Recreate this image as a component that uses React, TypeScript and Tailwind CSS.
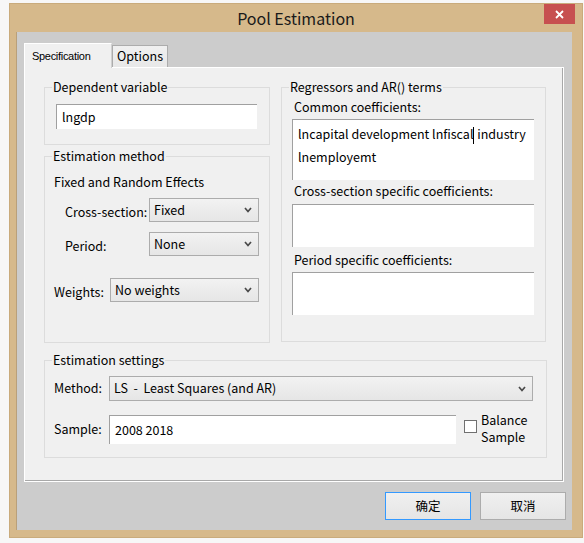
import React from 'react';

const font = "font-['Noto_Sans_CJK_SC','Noto_Sans',sans-serif]";

const Chevron = () => (
  <svg width="8" height="6" viewBox="0 0 8 6" className="shrink-0">
    <path d="M1 1 L4 4.5 L7 1" fill="none" stroke="#4a4a4a" strokeWidth="1.7" />
  </svg>
);

const Select: React.FC<{ value: string; className: string }> = ({ value, className }) => (
  <div
    className={`flex items-center justify-between pl-[4px] pr-[6px] border border-[#acacac] bg-linear-to-b from-[#f2f2f2] to-[#e6e6e6] text-[12.5px] whitespace-pre ${className}`}
  >
    <span>{value}</span>
    <Chevron />
  </div>
);

const Group: React.FC<{ label: string; className: string; children: React.ReactNode }> = ({
  label,
  className,
  children,
}) => (
  <fieldset className={`border border-[#dcdcdc] ${className}`}>
    <legend className="ml-[7px] px-[1px] text-[12.5px] leading-[16px]">{label}</legend>
    {children}
  </fieldset>
);

export default function App() {
  return (
    <div className={`w-[584px] h-[543px] bg-[#f7f7f7] pt-[3px] pl-[9px] text-black whitespace-nowrap ${font}`}>
      <div className="w-[574px] h-[535px] bg-[#d6b98b] border border-[#c9ab7c] flex flex-col">
        {/* title bar */}
        <div className="relative h-[28px] shrink-0 flex items-center justify-center">
          <span className="text-[16px] text-[#1a1a1a]">Pool Estimation</span>
          <div className="absolute right-[7px] top-0 w-[31px] h-[20px] bg-[#c75050] flex items-center justify-center">
            <svg width="9" height="9" viewBox="0 0 9 9">
              <path d="M1 1 L8 8 M8 1 L1 8" stroke="#fff" strokeWidth="1.8" />
            </svg>
          </div>
        </div>

        {/* client */}
        <div className="ml-[6px] w-[556px] h-[498px] bg-[#cccccc] border-l border-[#b9a07a] pt-[10px]">
          {/* tabs */}
          <div className="flex items-end pl-[7px] h-[25px]">
            <div className="relative z-10 w-[88px] h-[25px] -mb-px bg-[#f0f0f0] border-l border-t border-white border-r border-r-[#d0d0d0] pl-[7px] pt-[4px] font-['Liberation_Sans',sans-serif] text-[11px] tracking-[-0.3px]">
              Specification
            </div>
            <div className="w-[56px] h-[22px] bg-linear-to-b from-[#f0f0f0] to-[#e8e8e8] border border-b-0 border-[#acacac] flex items-center justify-center text-[12.5px]">
              Options
            </div>
          </div>

          {/* panel */}
          <div className="ml-[7px] w-[540px] h-[415px] bg-[#f0f0f0] border border-white shadow-[inset_-1px_-1px_0_#a8a8a8] pl-[19px] pt-[11px]">
            <div className="flex gap-[11px]">
              <div className="flex flex-col w-[226px]">
                <Group label="Dependent variable" className="h-[66px]">
                  <div className="ml-[11px] mt-[9px] w-[201px] h-[25px] bg-white border-t border-l border-[#a0a0a0] pl-[5px] text-[12.5px] leading-[23px]">
                    lngdp
                  </div>
                </Group>
                <Group label="Estimation method" className="mt-[3px] h-[195px]">
                  <div className="text-[12.5px] leading-[16px] pl-[9px] mt-[10px]">Fixed and Random Effects</div>
                  <div className="flex items-center mt-[8px] pl-[20px]">
                    <span className="w-[84px] text-[12.5px] mt-[4px]">Cross-section:</span>
                    <Select value="Fixed" className="w-[110px] h-[24px]" />
                  </div>
                  <div className="flex items-center mt-[10px] pl-[20px]">
                    <span className="w-[84px] text-[12.5px] mt-[4px]">Period:</span>
                    <Select value="None" className="w-[110px] h-[24px]" />
                  </div>
                  <div className="flex items-center mt-[22px] pl-[9px]">
                    <span className="w-[56px] text-[12.5px] mt-[4px]">Weights:</span>
                    <Select value="No weights" className="w-[149px] h-[24px]" />
                  </div>
                </Group>
              </div>

              <Group label="Regressors and AR() terms" className="w-[265px] h-[263px]">
                <div className="pl-[12px] mt-[4px] text-[12.5px] leading-[16px]">Common coefficients:</div>
                <div className="ml-[10px] mt-[4px] w-[242px] h-[61px] bg-white border-t border-l border-[#a0a0a0] pl-[5px] pt-[2px] text-[12.5px] leading-[23px]">
                  <div>
                    lncapital development lnfiscal
                    <span className="inline-block w-px h-[17px] bg-black align-middle" />
                    {' '}industry
                  </div>
                  <div>lnemployemt</div>
                </div>
                <div className="pl-[12px] mt-[3px] text-[12.5px] leading-[16px]">Cross-section specific coefficients:</div>
                <div className="ml-[10px] mt-[5px] w-[242px] h-[43px] bg-white border-t border-l border-[#a0a0a0]" />
                <div className="pl-[12px] mt-[5px] text-[12.5px] leading-[16px]">Period specific coefficients:</div>
                <div className="ml-[10px] mt-[4px] w-[242px] h-[43px] bg-white border-t border-l border-[#a0a0a0]" />
              </Group>
            </div>

            <Group label="Estimation settings" className="mt-[9px] w-[503px] h-[106px]">
              <div className="flex items-center mt-[8px] pl-[9px]">
                <span className="w-[55px] text-[12.5px]">Method:</span>
                <Select value="LS  -  Least Squares (and AR)" className="w-[424px] h-[25px]" />
              </div>
              <div className="flex items-center mt-[13px] pl-[9px]">
                <span className="w-[55px] text-[12.5px]">Sample:</span>
                <div className="w-[347px] h-[29px] bg-white border-t border-l border-[#a0a0a0] pl-[5px] text-[12.5px] leading-[27px]">
                  2008 2018
                </div>
                <div className="ml-[8px] w-[13px] h-[13px] border border-[#707070] bg-white self-start mt-[6px]" />
                <div className="ml-[4px] text-[12.5px] leading-[17px] self-start -mt-[3px]">
                  <div>Balance</div>
                  <div>Sample</div>
                </div>
              </div>
            </Group>
          </div>

          {/* buttons */}
          <div className="flex justify-end gap-[9px] pr-[6px] mt-[10px]">
            <button className="w-[86px] h-[28px] border border-[#3399ff] bg-linear-to-b from-[#f0f0f0] to-[#e5e5e5] text-[12.5px]">
              确定
            </button>
            <button className="w-[86px] h-[28px] border border-[#acacac] bg-linear-to-b from-[#f0f0f0] to-[#e5e5e5] text-[12.5px]">
              取消
            </button>
          </div>
        </div>
      </div>
    </div>
  );
}
